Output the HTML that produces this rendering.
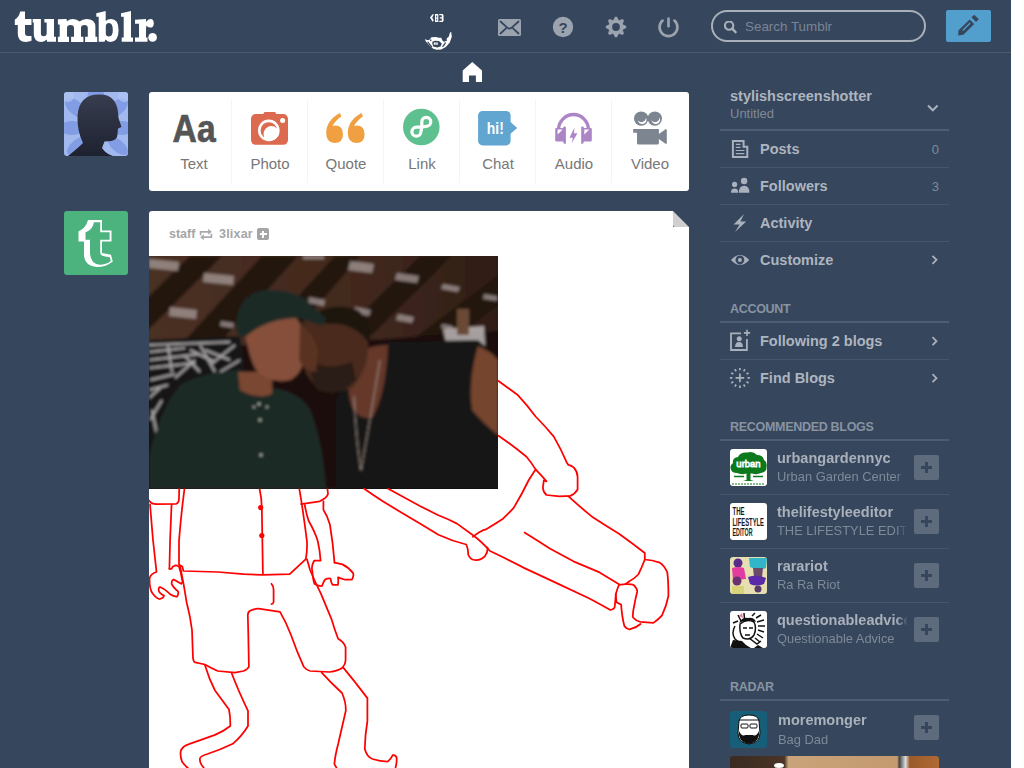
<!DOCTYPE html>
<html><head><meta charset="utf-8">
<style>
*{margin:0;padding:0;box-sizing:border-box}
html,body{width:1024px;height:768px;overflow:hidden;background:#fff}
body{font-family:"Liberation Sans",sans-serif;position:relative}
#page{position:absolute;left:0;top:0;width:1011px;height:768px;background:#36465d;overflow:hidden}
.a{position:absolute}
#hdrline{position:absolute;left:0;top:52px;width:1011px;height:1px;background:#4b5a6f}
#search{position:absolute;left:711px;top:10px;width:215px;height:32px;border:2px solid #a9b0b9;border-radius:16px}
#search span{position:absolute;left:32px;top:7px;font-size:13.4px;color:#7a8594}
#pencil{position:absolute;left:946px;top:10px;width:45px;height:32px;background:#529ecc;border-radius:2px}
.avatar{position:absolute;width:64px;height:64px;border-radius:3px;overflow:hidden}
#composer{position:absolute;left:149px;top:92px;width:540px;height:99px;background:#fff;border-radius:3px}
.lbl{position:absolute;top:63px;width:76px;text-align:center;font-size:15px;color:#777}
.csep{position:absolute;top:8px;width:0;height:83px;border-left:1px solid #f4f4f4}
#card{position:absolute;left:149px;top:211px;width:540px;height:600px;background:#fff;border-radius:3px 0 0 0}
.sb{position:absolute;left:760px;font-weight:bold;font-size:14.5px;color:#aeb5bf;white-space:nowrap}
.sl1{position:absolute;left:720px;width:229px;height:1px;background:#46566c}
.sl2{position:absolute;left:720px;width:229px;height:2px;background:#4e5d73}
.shd{position:absolute;left:730px;font-weight:bold;font-size:12.5px;color:#8893a2;white-space:nowrap;letter-spacing:-0.3px}
.cnt{position:absolute;left:900px;width:39px;text-align:right;font-size:13px;color:#7f8a98}
.rt{position:absolute;left:777px;font-weight:bold;font-size:14.5px;color:#aab1bb;white-space:nowrap;width:131px;overflow:hidden;-webkit-mask-image:linear-gradient(to right,#000 91%,transparent 100%)}
.rs{position:absolute;left:777px;font-size:12.9px;color:#7f8a98;white-space:nowrap;width:131px;overflow:hidden;-webkit-mask-image:linear-gradient(to right,#000 91%,transparent 100%)}
.plus{position:absolute;left:914px;width:25px;height:25px;border-radius:2px;background:#5e6b7d}
.plus:before{content:"";position:absolute;left:7px;top:11px;width:11px;height:3px;background:#36465d}
.plus:after{content:"";position:absolute;left:11px;top:7px;width:3px;height:11px;background:#36465d}
.ra{position:absolute;left:730px;width:37px;height:37px;border-radius:3px;overflow:hidden}
</style></head><body>
<div id="page">
  <div id="hdrline"></div>
  <!-- logo -->
  <svg class="a" style="left:0;top:0" width="170" height="52" viewBox="0 0 170 52">
    <g fill="#fff">
      <path d="M20.2 11.6 L25 11.6 L25 19 L31.5 19 L31.5 25 L25 25 L25 33 Q25 36 28 36 L31.5 36 L31.5 40.8 Q29 41.9 26 41.9 Q17.8 41.9 17.8 34 L17.8 25 L14.8 25 L14.8 19.6 Q19 17.5 20.2 11.6 Z"/>
      <path d="M32.7 19 L40.9 19 L40.9 33.5 Q40.9 36.2 43.5 36.2 Q46.7 36.2 46.7 33 L46.7 22.6 L44.4 22.6 L44.4 19 L54 19 L54 36.8 L56 36.8 L56 41.8 L47 41.8 L46.7 39.6 Q44.5 41.9 41.5 41.9 Q33.8 41.9 33.8 34 L33.8 22.6 L32.7 22.6 Z"/>
      <path d="M57.9 19.3 L66.5 19.1 L67 21.3 Q69.5 19 73 19 Q77 19 79.6 21.6 Q82.5 19 86.5 19 Q95.4 19 95.4 27 L95.4 36.8 L97.2 36.8 L97.2 42 L85.1 42 L85.1 36.8 L87.8 36.8 L87.8 28 Q87.8 25 84.5 25 Q81 25 81 28 L81 36.8 L83.4 36.8 L83.4 42 L71.1 42 L71.1 36.8 L74 36.8 L74 28 Q74 25 70.5 25 Q67 25 67 28 L67 36.8 L69 36.8 L69 42 L57.9 42 L57.9 36.8 L59.7 36.8 L59.7 24.4 L57.9 24.4 Z"/>
      <path fill-rule="evenodd" d="M96.3 13.3 L105.7 11 L105.7 21 Q107.5 19 111 19 Q118.6 19 118.6 30.3 Q118.6 41.9 110.5 41.9 Q107 41.9 105.5 39.5 L104.5 41.8 L98.7 41.8 L98.7 16.8 L96.3 16.8 Z M105.8 26.5 Q105.8 23 109 23 Q112.8 23 112.8 30 Q112.8 36.5 109 36.5 Q105.8 36.5 105.8 33.5 Z"/>
      <path d="M121 13.3 L131 11 L131 37.4 L133 37.4 L133 41.8 L121.7 41.8 L121.7 37.4 L123.7 37.4 L123.7 16.8 L121 16.8 Z"/>
      <path d="M135 19.8 L146 19 L146 22 Q148 19 150.5 19 Q153.8 19 153.8 23.4 Q153.8 27.6 150 27.6 Q147.5 27.6 146.5 25.5 Q146 27 146 30 L146 37.4 L147.5 37.4 L147.5 41.8 L135 41.8 L135 37.4 L139 37.4 L139 23.8 L135 23.8 Z"/>
      <circle cx="152.6" cy="37.4" r="4.3"/>
    </g>
  </svg>

  <!-- header icons -->
  <svg class="a" style="left:400px;top:0" width="300" height="90" viewBox="400 0 300 90">
    <g fill="#fff">
      <!-- beard thing top -->
      <path d="M430 17.5 L432.5 14.3 L434 14.5 L432.2 17.6 L433.8 20.6 L432.5 21.8 Z"/>
      <path fill-rule="evenodd" d="M435 14 L438.3 14 L438.3 22 L435 22 Z M436.2 15.6 h1 v1.8 h-1 z M436.2 18.8 h1 v1.8 h-1 z"/>
      <path d="M439.3 14 L442.8 14 Q444.3 15.4 443.4 17.8 Q444.4 20.5 442.8 22 L439.3 22 L439.3 20.7 L441.8 20.7 L441.8 18.5 L439.8 18.5 L439.8 17.3 L441.8 17.3 L441.8 15.3 L439.3 15.3 Z"/>
      <path fill-rule="evenodd" d="M424.9 38.9 L425.7 41.2 L429.2 45.2 L433.2 48.7 L436.6 49.8 L441.2 49.5 L445.8 47 L449.8 42.4 L451.8 36.7 L451.2 32.1 L450 32.6 L448.7 36.7 L446.6 38.4 L446.9 40.7 L444 41.8 L442.6 40.7 L441.2 37.8 L438.3 37.8 L436.6 36.9 L431.5 37.2 L429.2 40.1 L426.9 40.1 Z M432.3 41.8 L434.9 40.7 L438.9 41 L441.8 43.5 L440.6 46.4 L437.2 47.5 L433.2 46.4 L432.3 43.5 Z"/>
      <path fill-rule="evenodd" d="M433.8 42.4 L437.8 42.4 L437.8 44.7 L433.8 44.7 Z M435.4 43.2 h1 v1 h-1 z"/>
      <path d="M427.8 41.8 Q429.5 45 432 47 M445.5 42.5 Q444.5 45 442.5 46.8 M430.5 39.5 L431 41" stroke="#36465d" stroke-width="1.3" fill="none"/>
      <!-- home -->
      <path d="M472.3 62 L482 70.4 L482 82 L475.9 82 L475.9 75.6 L469 75.6 L469 82 L462.7 82 L462.7 70.4 Z"/>
    </g>
    <g fill="#9ba3af">
      <!-- mail -->
      <rect x="498" y="19" width="23" height="17" rx="1.5"/>
      <path d="M500.5 21.5 L507.5 27.8 Q509.5 29.5 511.5 27.8 L518.5 21.5 M500.5 33.5 L506 28.3 M518.5 33.5 L513 28.3" stroke="#36465d" stroke-width="1.8" fill="none" stroke-linecap="round"/>
      <!-- help -->
      <circle cx="563" cy="27" r="10.2"/>
      <text x="563" y="32.5" text-anchor="middle" font-family="Liberation Sans" font-weight="bold" font-size="15" fill="#36465d">?</text>
      <!-- gear -->
      <g transform="translate(616 27)"><circle r="7.6"/><path d="M-2.6 -7 L-1 -10.2 L1 -10.2 L2.6 -7 Z" transform="rotate(0)"/><path d="M-2.6 -7 L-1 -10.2 L1 -10.2 L2.6 -7 Z" transform="rotate(45)"/><path d="M-2.6 -7 L-1 -10.2 L1 -10.2 L2.6 -7 Z" transform="rotate(90)"/><path d="M-2.6 -7 L-1 -10.2 L1 -10.2 L2.6 -7 Z" transform="rotate(135)"/><path d="M-2.6 -7 L-1 -10.2 L1 -10.2 L2.6 -7 Z" transform="rotate(180)"/><path d="M-2.6 -7 L-1 -10.2 L1 -10.2 L2.6 -7 Z" transform="rotate(225)"/><path d="M-2.6 -7 L-1 -10.2 L1 -10.2 L2.6 -7 Z" transform="rotate(270)"/><path d="M-2.6 -7 L-1 -10.2 L1 -10.2 L2.6 -7 Z" transform="rotate(315)"/><circle r="3.9" fill="#36465d"/></g>
      <!-- power -->
      <path d="M662.6 20.6 A8.9 8.9 0 1 0 674.4 20.6" stroke="#9ba3af" stroke-width="2.7" fill="none" stroke-linecap="round"/>
      <rect x="667.2" y="17.2" width="2.6" height="10.3" rx="1.3"/>
    </g>
  </svg>
  <div id="search"><svg class="a" style="left:11px;top:9px" width="14" height="14" viewBox="0 0 14 14"><circle cx="5.1" cy="4.6" r="4.2" stroke="#a9b0b9" stroke-width="2.1" fill="none"/><path d="M8.2 7.7 L11.6 11.1" stroke="#a9b0b9" stroke-width="2.5" stroke-linecap="round"/></svg><span>Search Tumblr</span></div>
  <div id="pencil"><svg class="a" style="left:0;top:0" width="45" height="32" viewBox="946 10 45 32">
    <path fill-rule="evenodd" d="M958.1 35.6 L958.6 30.2 L969.6 19.4 L974.2 24 L963.4 34.8 Z M962.3 30 L963.2 30.9 L970.6 23.5 L969.7 22.6 Z" fill="#36465d"/>
    <path d="M971.5 17.3 L974.2 14.7 L978.8 19.3 L976 22 Z" fill="#36465d"/>
  </svg></div>

  <div class="avatar" style="left:64px;top:92px;background:#a2b9f0">
    <svg class="a" style="left:0;top:0" width="64" height="64" viewBox="64 92 64 64">
      <g fill="#829de3">
        <ellipse cx="96" cy="100" rx="9" ry="14" transform="rotate(0 96 100)"/>
        <ellipse cx="76" cy="108" rx="7" ry="13" transform="rotate(-50 76 108)"/>
        <ellipse cx="117" cy="108" rx="7" ry="13" transform="rotate(50 117 108)"/>
        <ellipse cx="72" cy="128" rx="7" ry="12" transform="rotate(-90 72 128)"/>
        <ellipse cx="122" cy="128" rx="7" ry="12" transform="rotate(90 122 128)"/>
        <ellipse cx="77" cy="146" rx="6" ry="12" transform="rotate(-130 77 146)"/>
        <ellipse cx="118" cy="146" rx="6" ry="12" transform="rotate(130 118 146)"/>
      </g>
      <g fill="#aec3f3" opacity="0.8">
        <ellipse cx="68" cy="96" rx="6" ry="6"/>
        <ellipse cx="124" cy="96" rx="6" ry="6"/>
      </g>
      <defs><linearGradient id="hg" x1="0" y1="0" x2="0" y2="1"><stop offset="0" stop-color="#383d4f"/><stop offset="1" stop-color="#1d2130"/></linearGradient></defs><path fill="url(#hg)" d="M99 94.5 Q116 94 118 112 L118.5 118 L121.5 127 L118 128.5 L117.5 134 Q117.5 139.5 111.5 141 L104.5 141.5 L102 148 Q106 154 113 156 L68 156 Q78 148 83 143 Q77 131 77.5 116 Q79 94.5 99 94.5 Z"/>
    </svg>
  </div>
  <div id="composer">

    <svg class="a" style="left:0;top:0" width="540" height="99" viewBox="149 92 540 99">
      <text x="172.6" y="141.8" textLength="43" lengthAdjust="spacingAndGlyphs" font-family="Liberation Sans" font-weight="bold" font-size="39.5" fill="#555" stroke="#555" stroke-width="0.7">Aa</text>
      <!-- camera -->
      <g fill="#dc6a4f">
        <path d="M264.5 112 L275 112 L277 115 L262.5 115 Z"/>
        <rect x="251" y="114" width="37" height="30.8" rx="4.7"/>
      </g>
      <circle cx="268.8" cy="130.4" r="10.8" fill="#fff"/>
      <circle cx="268.8" cy="130.4" r="8.2" fill="#dc6a4f"/>
      <clipPath id="lens"><circle cx="268.8" cy="130.4" r="10.8"/></clipPath><circle cx="271.4" cy="134" r="7.9" fill="#fff" clip-path="url(#lens)"/>
      <circle cx="282.6" cy="120.5" r="2.5" fill="#fff"/>
      <!-- quote -->
      <g fill="#f0a040">
        <path d="M339.8 113 L341.4 116.2 Q335 121 332.5 126 Q334 125.6 335 125.6 Q343 125.8 343 134.2 Q343 142.9 334.6 142.9 Q326.2 142.9 326.2 133 Q326.2 120.5 339.8 113 Z"/>
        <path d="M361.4 113 L363 116.2 Q356.6 121 354.1 126 Q355.6 125.6 356.6 125.6 Q364.6 125.8 364.6 134.2 Q364.6 142.9 356.2 142.9 Q347.8 142.9 347.8 133 Q347.8 120.5 361.4 113 Z"/>
      </g>
      <!-- link -->
      <circle cx="421.3" cy="127" r="18.3" fill="#5fc08f"/>
      <path d="M421.8 127.2 L421.8 121.8 A4.5 4.5 0 1 1 426.3 126.3 L421.8 127.2 L416.4 127.2 A4.5 4.5 0 1 0 420.9 131.7 L421.8 127.2" stroke="#fff" stroke-width="3.2" fill="none" stroke-linejoin="round"/>
      <!-- chat -->
      <rect x="478.1" y="110.9" width="32.5" height="34.5" rx="4.4" fill="#60a6d1"/>
      <path d="M510 121.6 L517.2 127.9 L510 134.2 Z" fill="#60a6d1"/>
      <text x="486.8" y="133.9" textLength="17" lengthAdjust="spacingAndGlyphs" font-family="Liberation Sans" font-weight="bold" font-size="16.5" fill="#fff">hi!</text>
      <!-- audio -->
      <g fill="#ab85c6">
        <path d="M558.5 130 A15 15.5 0 0 1 588.5 130" stroke="#ab85c6" stroke-width="3.3" fill="none"/>
        <path d="M555.2 129 Q555.2 127.9 556.5 127.9 L563 127.9 L564 126.2 L565.9 127 L565.9 143.7 L564 143.7 L563 141.5 L556.5 141.5 Q555.2 141.5 555.2 140 Z"/>
        <path d="M591.8 129 Q591.8 127.9 590.5 127.9 L584 127.9 L583 126.2 L581.2 127 L581.2 143.7 L583 143.7 L584 141.5 L590.5 141.5 Q591.8 141.5 591.8 140 Z"/>
        <path d="M574.5 127.5 L569.5 137.8 L572.9 137.8 L571.8 143.2 L577.4 133.2 L574 133.2 Z"/>
      </g>
      <path d="M557.6 129.6 L562.6 129.6 L557.6 134.6 Z M584.3 129.6 L589.3 129.6 L584.3 134.6 Z" fill="#fff"/>
      <!-- video -->
      <g fill="#7c8590">
        <circle cx="641.2" cy="118.6" r="7.2"/>
        <circle cx="654.8" cy="118.6" r="7.2"/>
        <path d="M633.2 129 L658.9 129 L658.9 133.9 L665.5 129.3 Q666.8 128.8 666.8 130 L666.8 143 Q666.8 144.2 665.5 143.7 L658.9 139 L658.9 143 Q658.9 144.5 657.4 144.5 L638.5 144.5 Q637 144.5 637 143 L637 132.8 L633.2 132.8 Z"/>
      </g>
      <circle cx="642.2" cy="119.8" r="4.3" fill="#fff"/><circle cx="641.4" cy="117.6" r="4.6" fill="#7c8590"/><circle cx="655.8" cy="119.8" r="4.3" fill="#fff"/><circle cx="655" cy="117.6" r="4.6" fill="#7c8590"/>
    </svg>
    <div class="lbl" style="left:7px">Text</div>
    <div class="lbl" style="left:83px">Photo</div>
    <div class="lbl" style="left:159px">Quote</div>
    <div class="lbl" style="left:235px">Link</div>
    <div class="lbl" style="left:311px">Chat</div>
    <div class="lbl" style="left:387px">Audio</div>
    <div class="lbl" style="left:463px">Video</div>
    <div class="csep" style="left:82px"></div>
    <div class="csep" style="left:158px"></div>
    <div class="csep" style="left:234px"></div>
    <div class="csep" style="left:310px"></div>
    <div class="csep" style="left:386px"></div>
    <div class="csep" style="left:462px"></div>
  </div>

  <div class="avatar" style="left:64px;top:211px;background:#4cb37e">
    <svg class="a" style="left:0;top:0" width="64" height="64" viewBox="64 211 64 64">
      <path fill="#fff" d="M88 220 L102 220 L102 230.5 L111.5 230.5 L111.5 241.5 L102 241.5 L102 253 L111 254.8 L112.8 261.5 Q106 267 97 267 Q84 266 84 254 L84 241.5 L78.5 241.5 L78.5 231.5 Q86 228 88 220 Z"/>
      <path fill="#4cb37e" d="M94 222.3 L100.2 222.3 L100.2 232.3 L109.6 232.3 L109.6 239.7 L100.2 239.7 L100.2 252 Q100.2 255.8 104 256.2 L109.8 257.2 L110.8 261 Q106 264.8 100 264.8 Q90 264 90 252 L90 239.7 L85.5 239.7 L85.5 232.3 Q92.5 230 94 222.3 Z"/>
    </svg>
  </div>
  <div id="card">
    <div class="a" style="left:524px;top:0;width:16px;height:16px;background:#36465d"></div>
    <svg class="a" style="left:524px;top:0" width="16" height="16" viewBox="0 0 16 16"><path d="M0 0 L16 16 L2 16 Q0 16 0 14 Z" fill="#cfcfcf"/></svg>

    <svg class="a" style="left:0;top:45px" width="349" height="233" viewBox="149 256 349 233">
      <defs>
        <filter id="bl" x="-5%" y="-5%" width="110%" height="110%"><feGaussianBlur stdDeviation="1.4"/></filter>
        <linearGradient id="pl" x1="0" y1="0" x2="1" y2="0"><stop offset="0" stop-color="#4a3024"/><stop offset="0.6" stop-color="#42281d"/><stop offset="1" stop-color="#2e1c16"/></linearGradient>
      </defs>
      <rect x="149" y="256" width="349" height="233" fill="#1c1010"/>
      <g filter="url(#bl)">
        <!-- ceiling planks -->
        <path d="M140 250 L505 250 L505 330 L300 360 L140 350 Z" fill="url(#pl)"/>
        <!-- dark beams (rising to the right) -->
        <g fill="#22120e">
          <path d="M140 305 L190 256 L222 256 L140 338 Z"/>
          <path d="M185 340 L262 256 L298 256 L222 340 Z"/>
          <path d="M262 335 L335 256 L360 256 L292 335 Z"/>
          <path d="M340 335 L420 256 L452 256 L372 335 Z"/>
          <path d="M405 345 L505 270 L505 300 L440 350 Z"/>
        </g>
        <g fill="#a89c9a" opacity="0.75">
          <path d="M149 259 L179 262 L178 271 L149 268 Z"/>
          <path d="M204 273 L234 276 L233 285 L203 282 Z"/>
          <path d="M170 307 L197 310 L196 319 L169 316 Z"/>
          <path d="M221 321 L234 323 L233 328 L220 326 Z"/>
          <path d="M303 256 L324 256 L324 259 L303 259 Z"/>
          <path d="M309 297 L325 300 L324 306 L308 303 Z"/>
          <path d="M350 261 L374 264 L372 273 L348 270 Z"/>
          <path d="M397 273 L419 276 L417 283 L395 280 Z"/>
          <path d="M443 284 L460 287 L458 292 L441 289 Z"/>
          <path d="M355 307 L371 310 L369 316 L353 313 Z"/>
          <path d="M398 314 L414 317 L412 323 L396 320 Z"/>
          <path d="M484 294 L497 296 L497 301 L483 299 Z"/>
          <path d="M442 324 L453 326 L452 330 L441 328 Z"/>
        </g>
        <!-- back wall dark -->
        <path d="M149 345 L300 345 L505 330 L505 489 L149 489 Z" fill="#1e1010"/>
        <!-- graffiti wall left -->
        <path d="M149 340 L240 336 L245 370 L230 400 L175 386 L149 455 Z" fill="#161416"/>
        <g stroke="#c8c4c4" stroke-width="2" fill="none" opacity="0.85">
          <path d="M149 352 L185 348 M149 360 L200 354 M149 368 L195 363 M168 345 L172 372 M190 350 L215 362 M205 350 L230 360 M150 380 L175 374 M149 398 L160 388 M152 410 L157 435 M210 365 L235 345 M220 372 L240 360 M185 356 L200 372 M150 420 L162 400 M158 440 L170 420 M149 345 L230 342 M200 345 L215 372 M175 378 L195 360 M149 390 L168 385"/>
        </g>
        <!-- right wall lit -->
        <path d="M443 329 L484 326 L486 362 L450 360 Z" fill="#bdb8b8" opacity="0.85"/>
        <rect x="457" y="309" width="12" height="26" fill="#6a4a36"/>
        <!-- right person black tee -->
        <path d="M336 400 Q345 372 388 342 L478 340 Q490 350 498 360 L498 489 L336 489 Z" fill="#141213"/>
        <!-- arm skin -->
        <path d="M478 346 Q492 352 498 360 L498 435 Q485 425 472 410 Q468 380 478 346 Z" fill="#74442f"/>
        <!-- v-neck skin -->
        <path d="M346 360 Q365 345 388 345 Q386 395 372 418 Q352 420 349 395 Z" fill="#65382a"/>
        <!-- chain -->
        <path d="M354 396 Q356 440 361 470 M380 360 Q370 420 361 470" stroke="#a89a90" stroke-width="0.9" fill="none"/>
        <!-- right person head -->
        <path d="M300 332 Q315 312 340 312 Q362 318 368 340 Q370 368 352 388 Q330 396 312 382 Q300 366 299 345 Z" fill="#4a2a1e"/>
        <path d="M308 318 Q330 300 358 310 Q372 322 370 345 Q355 322 328 324 Z" fill="#1a1210"/>
        <path d="M312 360 Q325 372 352 362 L356 380 Q340 398 318 390 Q308 378 312 360 Z" fill="#2a1a14"/>
        <!-- left person shirt -->
        <path d="M149 457 Q160 410 180 385 Q205 372 240 370 L272 388 Q300 392 310 410 Q322 440 326 489 L149 489 Z" fill="#1f2b27"/>
        <path d="M238 372 L272 372 L272 394 Q258 400 240 390 Z" fill="#7a4632"/>
        <!-- face -->
        <path d="M245 320 Q258 306 285 310 Q304 318 305 345 Q306 372 290 380 Q268 384 256 370 Q246 352 245 320 Z" fill="#85503a"/>
        <path d="M246 330 Q252 324 256 330 L256 345 Q250 348 246 340 Z" fill="#8a5038"/>
        <!-- cap -->
        <path d="M236 330 Q236 292 268 290 Q300 290 312 306 L326 318 L322 326 L300 318 Q268 318 248 335 Q240 340 236 330 Z" fill="#1d2a25"/>
        <!-- right face under -->
        <path d="M300 326 Q312 330 318 350 L316 372 Q305 372 299 360 Z" fill="#5a3324"/>
        <!-- buttons -->
        <circle cx="259" cy="404" r="1.2" fill="#cfcfc0"/><circle cx="254" cy="407" r="1.1" fill="#cfcfc0"/><circle cx="267" cy="407" r="1.1" fill="#cfcfc0"/><circle cx="260" cy="420" r="1.2" fill="#cfcfc0"/><circle cx="261" cy="455" r="1.2" fill="#cfcfc0"/>
      </g>
    </svg>

    <svg class="a" style="left:0;top:159px" width="540" height="398" viewBox="149 370 540 398">
      <g stroke="#f00" stroke-width="1.75" fill="none" stroke-linejoin="round" stroke-linecap="round">
        <!-- left sleeve cuff -->
        <path d="M149 500.5 Q151 504 156 504.2 L176 503.9 Q179 503 179 498 L179.2 489"/>
        <!-- left arm outer + hand -->
        <path d="M150 504.3 L153 540 L156.5 572 Q150 574 149.5 579 Q149.5 590 153 594 Q157 599 160 599 Q164 598 164 595.6 Q159 593 158.7 590.3 Q158.5 587 160 587 Q165 589 170.5 594.6 Q175 597 177 596.7 Q179 594 178 591.3 Q173 587 171.6 583.8 Q171.6 580 173.7 579.5 Q178 582 181.2 583.8 Q183 582 182.3 580.6 Q181 572 179 566.6 Q176 565 174.8 565.6 Q172 566.5 171.6 568.8 L169.4 568.8"/>
        <!-- left arm inner -->
        <path d="M171.6 504.3 Q170 535 169.4 568.8"/>
        <!-- torso -->
        <path d="M184.4 489.3 Q181 515 179 540.9 L179 564.5 Q181 566 182.3 566.6 Q183 569 183.4 571 L217.8 572 L243.5 574.2 L262.9 574.8 L289.7 574.2 L305.8 559.1 Q307.5 550 306.9 540.9 Q303 510 299.4 489.3"/>
        <!-- buttons line -->
        <path d="M259.6 489.3 Q261.5 497 261.8 507.6 L262.9 574.2"/>
        <!-- right sleeve -->
        <path d="M301.1 504.1 L319.7 501.3 Q327 498 328 494 L327.5 489.3"/>
        <!-- right arm inner -->
        <path d="M304.8 505 Q306 513 308.6 520.8 Q315 532 317.8 541.2 Q320 551 320.6 560.7 L314.1 560.7 Q311 566 312.3 571 Q313 580 314.4 583.8 Q318 586.5 322 586 Q323.5 581 325.2 579.5 Q328 578 330.5 578.5 Q331.5 584 332.7 584.9 L338 584.9 Q338.5 580 338 577.4 Q342 579 344.5 579.5 L352 579.5 Q354 576 353.1 573.1 Q348 567 342.4 564.4 L334.5 562.6"/>
        <!-- right arm outer -->
        <path d="M323.4 501.3 L323.4 509.7 Q327.5 516 329.9 524.5 Q333 543 334.5 562.6"/>
        <!-- shorts -->
        <path d="M180.2 566.6 Q184 585 186.6 602.2 Q190.5 617 192 630.2 L193 658.1 Q193.5 662 195.2 662.4 L204.9 664.5 Q211 668 217.8 671 L235 672.7 L243.5 671 Q248 669 248.9 666.7 L248.3 634.5 L247.8 615.1 Q248 611.5 250 610.8 Q254 608.5 258.6 608.7 L280 611.9 Q286 622 290.8 634.5 Q297 652 303.7 666.7 Q307 670.5 310.1 671 L329.5 672 Q338 671 342.4 667.8 Q345.6 664 345.6 660.2 L345.6 647.3 Q344 642 338.1 638.8 Q334.5 629 331.6 619.4 Q326 606 320.9 593.6 Q315 582 310.1 570 L306.9 559.1"/>
        <!-- bracket -->
        <path d="M271.5 583.8 Q273.6 586 273.6 590 L273.6 602 Q273 604 271.5 604.2"/>
        <!-- left leg -->
        <path d="M204.9 665.1 Q209 679 215 690.5 Q222 700 229 709.5 Q230.5 717 230.3 726 Q224 731 215 734.9 Q201 740 189.6 743.8 Q182 746 180.7 751.4 Q180 756 182 761.6 Q185 766 188.4 768.5"/>
        <path d="M231.5 672.7 Q238 690 248 710.8 L248 726 Q242 736 232.8 743.8 Q220 750 207.4 754 Q200 756 199.8 759 Q200 764 203.6 767.5"/>
        <!-- right leg -->
        <path d="M321.7 672.7 Q331 683 342 693 Q346 702 345.8 710.8 Q342 727 338.2 743.8 Q335 756 334.4 764.1 L336.9 768.5"/>
        <path d="M343.3 667.6 Q356 683 367.4 698.1 L367.4 721 Q365 735 364.8 748.9 Q367 757 372.5 759 Q380 761.5 387.7 761.6 Q391 759 392.8 755.2 Q395.5 754.5 396.6 757.8 Q397 763 395.3 768.5"/>
        <!-- second figure: long lines -->
        <path d="M364.2 488.8 Q373 495 382.8 501.3 L401.3 512.5 L419.9 523.6 L438.4 534.7 Q452 541 466.3 544.5 Q468.5 550 468.1 554.2 Q470 559.5 474.5 560 Q481 560.5 485 556.1 Q488 552 487.5 547.7"/>
        <path d="M388.3 488.8 Q405 498 419.9 506 L438.4 515.3 Q448 519 457 523.6 L473.7 535.7 Q481 541 490 551 Q507 559 524.5 568.1 L556.7 583.1 L588.9 598.2 Q600 604 610.4 610 Q614.7 609 614.7 606.8 Q615.5 600 615.8 593.9 Q617.5 588 619 584.8 L625.4 584.2 Q632 584 634 585.3 Q637.5 589 637.2 591.7 Q635.5 598 634 606.8 Q632.5 613 633 617.5 Q636 621 640.5 621.8 L653.4 622.9 Q659 619 662 615.4 Q666.5 606 668.4 596 Q668.5 582 667.3 572.4 Q664 565 659.8 562.7 Q652 560 644.8 559.5 L644.8 553 Q632 543 619 533.7 Q606 526 593.2 517.6 Q580 507 568.2 496.2"/>
        <path d="M615.8 593.9 Q616 600 616.8 602.5 L621.1 604.6 Q622 617 624.4 626.1 Q627 629.5 629.7 629.3 Q636 628 640.5 624"/>
        <path d="M644.8 559.5 Q642 567 638.3 574.5 Q634 579 629.7 581 L625.4 584.2"/>
        <path d="M524.5 532.6 Q538 541 550.2 548.8 L573.9 561.6 Q587 567 599.6 572.4 L619 584.2"/>
        <!-- arm edge -->
        <path d="M472.9 536.9 Q480 531 485.8 529.4 Q495 524 503 518.7 Q509 513 513.7 507.9 Q522 494 528.8 480 Q532.5 474 535.6 469.4"/>
        <!-- upper arm -->
        <path d="M498.5 381 Q508 388 517.4 394.7 Q527 405 535.6 416.5 Q545 426 553.8 436.6 Q561 449 566.6 462.2 L568.4 464.9 Q571.5 465.5 573.9 467.6 Q577.6 472 577.6 476.7 L577.6 489.5 Q575 494 570.3 495.9 L559.3 496.4 L546.5 495 Q543 492 542.9 487.7 L543.8 480.4 L546.5 481.3 Q541 475 535.6 469.4 Q531 462 526.5 456.7 Q512 445 498.5 435.7"/>
      </g>
      <circle cx="260.7" cy="507.6" r="2.6" fill="#f00"/>
      <circle cx="261.8" cy="535.5" r="2.6" fill="#f00"/>
    </svg>
    <div class="a" style="left:20px;top:16px;font-weight:bold;font-size:12.5px;color:#a5a5a5;white-space:nowrap">staff</div>
    <svg class="a" style="left:50px;top:17px" width="14" height="13" viewBox="0 0 14 13">
      <path d="M1.6 7.2 L1.6 3.8 L10 3.8" stroke="#aaa" stroke-width="1.7" fill="none"/><path d="M9.2 0.8 L12.8 3.8 L9.2 6.8 Z" fill="#aaa"/>
      <path d="M12.4 5.8 L12.4 9.2 L4 9.2" stroke="#aaa" stroke-width="1.7" fill="none"/><path d="M4.8 6.2 L1.2 9.2 L4.8 12.2 Z" fill="#aaa"/>
    </svg>
    <div class="a" style="left:70px;top:16px;font-weight:bold;font-size:12.5px;color:#a5a5a5;white-space:nowrap;letter-spacing:0.2px">3lixar</div>
    <div class="a" style="left:108px;top:17px;width:12px;height:12px;background:#a5a5a5;border-radius:2px">
      <div class="a" style="left:2.5px;top:5px;width:7px;height:2px;background:#fff"></div>
      <div class="a" style="left:5px;top:2.5px;width:2px;height:7px;background:#fff"></div>
    </div>
  </div>

  <!-- sidebar -->
  <div class="sb" style="left:730px;top:88px">stylishscreenshotter</div>
  <div class="a" style="left:730px;top:106px;font-size:13px;color:#7f8a98">Untitled</div>
  <div class="sl2" style="top:129px"></div>
  <div class="sb" style="top:141px">Posts</div><div class="cnt" style="top:142px">0</div>
  <div class="sl1" style="top:167px"></div>
  <div class="sb" style="top:178px">Followers</div><div class="cnt" style="top:179px">3</div>
  <div class="sl1" style="top:204px"></div>
  <div class="sb" style="top:215px">Activity</div>
  <div class="sl1" style="top:241px"></div>
  <div class="sb" style="top:252px">Customize</div>


  <svg class="a" style="left:720px;top:80px" width="230" height="320" viewBox="720 80 230 320">
    <g fill="none" stroke="#a9b1bc">
      <!-- chevron down -->
      <path d="M928 105.5 L932.8 110.3 L937.6 105.5" stroke-width="2"/>
      <!-- posts -->
      <path d="M732.9 141 L743.6 141 L743.6 146.8 L747.3 146.8 L747.3 157 L732.9 157 Z" stroke-width="2"/>
      <path d="M735.8 144.4 H740.5 M735.8 147.4 H740.5 M735.8 150.5 H744.4 M735.8 153.6 H744.4" stroke-width="1.2"/>
      <!-- chevrons right -->
      <path d="M932.5 255.8 L936.5 259.8 L932.5 263.8" stroke-width="1.8"/>
      <path d="M932.5 337.2 L936.5 341.2 L932.5 345.2" stroke-width="1.8"/>
      <path d="M932.5 374.2 L936.5 378.2 L932.5 382.2" stroke-width="1.8"/>
      <!-- following -->
      <path d="M741 333.3 L731 333.3 L731 350 L746.9 350 L746.9 339" stroke-width="1.8"/>
      <path d="M747 329.8 V336 M743.9 332.9 H750.1" stroke-width="1.6"/>
      <!-- find blogs -->
      <g transform="translate(739.9 377.9)" stroke-width="1.7">
        <path d="M0 -10 V-7.6 M0 10 V7.6 M-10 0 H-7.6 M10 0 H7.6"/>
        <path d="M0 -10 V-7.6 M0 10 V7.6 M-10 0 H-7.6 M10 0 H7.6" transform="rotate(30)"/>
        <path d="M0 -10 V-7.6 M0 10 V7.6 M-10 0 H-7.6 M10 0 H7.6" transform="rotate(60)"/>
        <path d="M0 -4.3 V4.3 M-4.3 0 H4.3"/>
      </g>
    </g>
    <g fill="#a9b1bc">
      <!-- followers -->
      <circle cx="734.6" cy="184.4" r="2.6"/>
      <path d="M731 192.8 Q731 188.6 734.6 188.6 Q738.2 188.6 738.2 192.8 Z"/>
      <circle cx="744.1" cy="181" r="3.2"/>
      <path d="M738.9 192.8 Q738.9 185.8 744.1 185.8 Q749.4 185.8 749.4 192.8 Z"/>
      <!-- bolt -->
      <path d="M744 214 L733.6 224.6 L739.6 224.6 L735 232 L746.2 221.4 L740.4 221.4 Z"/>
      <!-- eye -->
      <path fill-rule="evenodd" d="M731 259.9 Q740 250 749.2 259.9 Q740 269.8 731 259.9 Z M739.9 255.5 A4.4 4.4 0 1 0 739.91 255.5 Z"/>
      <circle cx="739.9" cy="259.9" r="2"/>
      <!-- following person -->
      <circle cx="739.2" cy="338.8" r="2.5"/>
      <path d="M735.1 346.9 Q735.1 341.9 739 341.9 Q742.9 341.9 742.9 346.9 Z"/>
    </g>
  </svg>
  <div class="shd" style="top:302px">ACCOUNT</div>
  <div class="sl2" style="top:321px"></div>
  <div class="sb" style="top:333px">Following 2 blogs</div>
  <div class="sl1" style="top:359px"></div>
  <div class="sb" style="top:370px">Find Blogs</div>

  <div class="shd" style="top:420px">RECOMMENDED BLOGS</div>
  <div class="sl2" style="top:439px"></div>
  <div class="ra" style="top:449px;background:#fff"><svg width="37" height="37" viewBox="0 0 37 37">
    <path fill="#0c7a1c" d="M3 14 Q2 9 8 8 Q10 3 17 3.5 Q23 1.5 27 6 Q33 6 34 11 Q37.5 13 36.5 18 Q37 23 31 24 Q27 26 22 24.5 L20.5 24.5 L20.5 31 L24 32 L13 32 L16.5 31 L16.5 24.5 Q11 26 7 24 Q1 24 0.5 19 Q0 16 3 14 Z"/>
    <text x="18.5" y="18" text-anchor="middle" font-family="Liberation Sans" font-size="9.5" fill="none" stroke="#fff" stroke-width="0.8">urban</text>
    <path d="M4 27.5 H14 M23 27.5 H33" stroke="#0c7a1c" stroke-width="1.3"/>
    <path d="M2 35 H35" stroke="#0c7a1c" stroke-width="1" stroke-dasharray="2 1"/>
  </svg></div>
  <div class="rt" style="top:450px">urbangardennyc</div><div class="rs" style="top:469px">Urban Garden Center</div><div class="plus" style="top:455px"></div>
  <div class="sl1" style="top:494px"></div>
  <div class="ra" style="top:503px;background:#fff"><svg width="37" height="37" viewBox="0 0 37 37">
    <g font-family="Liberation Sans" font-weight="bold" fill="#1a1a1a">
      <text x="2.5" y="12" font-size="10" textLength="12" lengthAdjust="spacingAndGlyphs">THE</text>
      <text x="2.5" y="22.5" font-size="10" textLength="31.5" lengthAdjust="spacingAndGlyphs">LIFESTYLE</text>
      <text x="2.5" y="33" font-size="10" textLength="20" lengthAdjust="spacingAndGlyphs">EDITOR</text>
    </g>
  </svg></div>
  <div class="rt" style="top:504px">thelifestyleeditor</div><div class="rs" style="top:523px">THE LIFESTYLE EDITOR</div><div class="plus" style="top:509px"></div>
  <div class="sl1" style="top:548px"></div>
  <div class="ra" style="top:557px;background:#e6dfb2"><svg width="37" height="37" viewBox="0 0 37 37">
    <circle cx="8" cy="6" r="4.5" fill="#5a2a8a"/>
    <path d="M2 11 Q8 9 14 11 L16 22 L3 23 Z" fill="#e23ca0"/>
    <circle cx="7" cy="24" r="4.5" fill="#6a3070"/>
    <path d="M2 29 L14 29 L14 37 L2 37 Z" fill="#d8d27a"/>
    <path d="M19 1 L37 1 L36 11 Q28 14 20 10 Z" fill="#30b6c8"/>
    <path d="M23 11 L33 11 L32 20 L24 20 Z" fill="#6a4a6a"/>
    <path d="M18 20 Q27 17 36 21 L34 27 Q26 30 20 27 Z" fill="#5a2aa8"/>
    <circle cx="28" cy="32" r="3.5" fill="#5a3a6a"/>
  </svg></div>
  <div class="rt" style="top:558px">rarariot</div><div class="rs" style="top:577px">Ra Ra Riot</div><div class="plus" style="top:563px"></div>
  <div class="sl1" style="top:602px"></div>
  <div class="ra" style="top:611px;background:#fff"><svg width="37" height="37" viewBox="0 0 37 37">
    <g stroke="#111" stroke-width="1.5" fill="none">
      <path d="M8 4 L11 10 M14 2 L14.5 8 M22 5 L25 2 M26 7 L31 4 M27 11 L34 9 M28 15 L35 15 M28 19 L34 21 M27 23 L33 27 M25 27 L30 31"/>
      <path d="M10 13 Q17 7 24 11 Q27 17 24 24 Q20 30 13 27 Q9 22 10 13 Z"/>
      <path d="M5 15 Q1 22 5 28 L10 32"/>
      <path d="M13 17 h4 M19 17 h4 M15 24 h5"/>
      <path d="M19 27 L27 33 L31 30 M3 12 L8 10"/>
    </g>
    <path d="M9 12 Q12 6 18 7 Q24 6 26 11 Q22 9 17 10 Q12 10 9 12 Z" fill="#111"/>
    <path d="M0 37 L3 29 L12 30 L16 34 L21 37 Z" fill="#111"/>
    <path d="M24 37 L28 34 L33 37 Z" fill="#111"/>
    <path d="M9 5 L12 2 L13 7 Z" fill="#e08090"/>
  </svg></div>
  <div class="rt" style="top:612px">questionableadvice</div><div class="rs" style="top:631px">Questionable Advice</div><div class="plus" style="top:617px"></div>

  <div class="shd" style="top:680px">RADAR</div>
  <div class="sl2" style="top:699px"></div>
  <div class="ra" style="top:711px;background:#175e78"><svg width="37" height="37" viewBox="0 0 37 37">
    <path d="M9 10 Q10 4 19 4 Q28 4 29 10 L30 22 Q30 32 19 33 Q8 32 8 22 Z" fill="#fff" stroke="#111" stroke-width="1"/>
    <path d="M9 20 Q12 26 15 24 L23 24 Q26 26 29 20 Q30 31 19 33 Q8 31 9 20 Z" fill="#111"/>
    <rect x="11" y="13" width="7" height="4" rx="1" fill="none" stroke="#111" stroke-width="1"/>
    <rect x="20" y="13" width="7" height="4" rx="1" fill="none" stroke="#111" stroke-width="1"/>
    <path d="M9 9 L29 9" stroke="#111" stroke-width="1"/>
  </svg></div>
  <div class="rt" style="top:712px;left:778px">moremonger</div><div class="rs" style="top:732px;left:778px">Bag Dad</div><div class="plus" style="top:715px"></div>
  <div class="a" style="left:730px;top:756px;width:209px;height:20px;border-radius:3px;overflow:hidden;background:linear-gradient(to right,#3a2a20 0%,#4a3526 26%,#c9a37a 28%,#c49a6e 80%,#444 81%,#ddd 84%,#9a5a2a 86%,#b06a34 100%)"><div class="a" style="left:44px;top:7px;width:10px;height:5px;border-radius:50%;background:#fff"></div></div>
</div>
</body></html>
